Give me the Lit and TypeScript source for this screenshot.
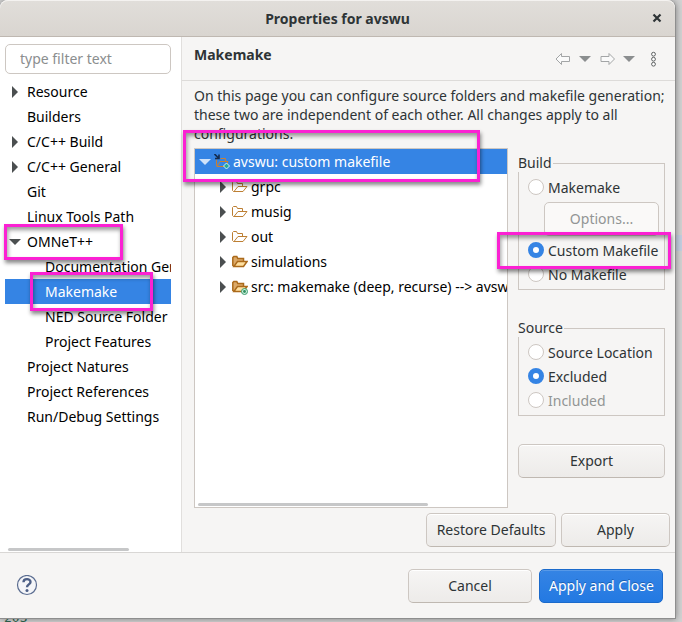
import { LitElement, html, css, svg, nothing } from "lit";
import { customElement, state } from "lit/decorators.js";
import { classMap } from "lit/directives/class-map.js";

interface Page {
  label: string;
  level: number;
  arrow?: "open" | "closed";
}

interface Folder {
  label: string;
  icon: "plain" | "full" | "source";
}

const pages: Page[] = [
  { label: "Resource", level: 0, arrow: "closed" },
  { label: "Builders", level: 0 },
  { label: "C/C++ Build", level: 0, arrow: "closed" },
  { label: "C/C++ General", level: 0, arrow: "closed" },
  { label: "Git", level: 0 },
  { label: "Linux Tools Path", level: 0 },
  { label: "OMNeT++", level: 0, arrow: "open" },
  { label: "Documentation Generation", level: 1 },
  { label: "Makemake", level: 1 },
  { label: "NED Source Folder", level: 1 },
  { label: "Project Features", level: 1 },
  { label: "Project Natures", level: 0 },
  { label: "Project References", level: 0 },
  { label: "Run/Debug Settings", level: 0 },
];

const folders: Folder[] = [
  { label: "grpc", icon: "plain" },
  { label: "musig", icon: "plain" },
  { label: "out", icon: "plain" },
  { label: "simulations", icon: "full" },
  { label: "src: makemake (deep, recurse) --> avswu", icon: "source" },
];

const closedArrow = svg`<path d="M3 0 L9 6 L3 12 Z" fill="currentColor" />`;
const openArrow = svg`<path d="M0 3 H12 L6 9 Z" fill="currentColor" />`;

const arrow = (kind?: "open" | "closed") => html`
  <svg class="arrow" viewBox="0 0 12 12" width="12" height="12" aria-hidden="true">
    ${kind === "open" ? openArrow : kind === "closed" ? closedArrow : nothing}
  </svg>
`;

const outline = svg`
  <path d="M2.5 12.5 H1.5 L0.5 11.5 V3.5 L1.5 2.5 H4.5 L5.5 4.5 H10.5 V7" fill="none" stroke="#bd7f33" />
  <path d="M2 12.5 L6 7.5 H15 L11 12.5 Z" fill="#fff" stroke="#bd7f33" />`;
const filled = svg`
  <path d="M2 12.5 L0.8 11.5 V3.5 L1.8 2.6 H4.8 L5.8 4.6 H11.5 V7" fill="#dba968" stroke="#ab6a1b" stroke-width="1.5" />
  <path d="M2 12.4 L5.5 7.5 H15 L11.5 12.4 Z" fill="#ffe0a0" stroke="#ab6a1b" stroke-width="1.5" />`;
const dot = svg`
  <circle cx="12.5" cy="12.5" r="3" fill="#cdeedd" stroke="#3a9d6c" />
  <circle cx="12.5" cy="12.5" r="1.4" fill="#2f8f60" />`;

const folderIcon = (kind: Folder["icon"]) => html`
  <svg class="icon" viewBox="0 0 16 16" width="16" height="16" aria-hidden="true">
    ${kind === "plain" ? outline : filled} ${kind === "source" ? dot : nothing}
  </svg>
`;

@customElement("app-root")
export class AppRoot extends LitElement {
  @state() private selected = "Makemake";

  static styles = css`
    :host {
      display: block;
      position: relative;
      min-height: 100vh;
      box-sizing: border-box;
      padding: 0 6px 3px 0;
      overflow: hidden;
      background: #d2d2d2;
      color: #2e3436;
      font: 14px/19px "Noto Sans", sans-serif;
    }
    * {
      box-sizing: border-box;
    }
    button,
    input {
      font: inherit;
      color: inherit;
      margin: 0;
    }
    .line-number {
      position: absolute;
      left: 4px;
      bottom: -3px;
      color: #2f6650;
      font: 13px/14px "DejaVu Sans Mono", monospace;
    }
    .backdrop-row {
      position: absolute;
      right: 0;
      top: 235px;
      width: 6px;
      height: 16px;
      background: #c4cfe0;
    }
    .dialog {
      position: relative;
      display: flex;
      flex-direction: column;
      min-height: calc(100vh - 3px);
      background: #f6f5f4;
      border-right: 1px solid #8e8e8e;
      border-bottom: 1px solid #8e8e8e;
      border-radius: 8px 8px 0 0;
      box-shadow: 0 0 6px #0006;
    }
    .titlebar {
      display: grid;
      grid-template-columns: 36px 1fr 36px;
      align-items: center;
      height: 37px;
      border-bottom: 1px solid #bfb8b1;
      border-radius: 8px 8px 0 0;
      background: linear-gradient(#e1deda, #d9d5d0);
      box-shadow: inset 0 1px #f4f2f0;
      text-align: center;
    }
    .titlebar h1,
    .page-head h2 {
      margin: 0;
      font-size: 14px;
      font-weight: 700;
    }
    .titlebar h1 {
      grid-column: 2;
    }
    .plain {
      display: flex;
      align-items: center;
      justify-content: center;
      padding: 0;
      border: 0;
      background: none;
      color: #8b8e8f;
    }
    .titlebar .plain {
      color: #2e3436;
    }
    .body {
      flex: 1;
      display: grid;
      grid-template-columns: 182px minmax(0, 1fr);
      border-bottom: 1px solid #d9d7d5;
    }
    .sidebar {
      display: flex;
      flex-direction: column;
      padding: 7px 10px 1px 5px;
      border-right: 1px solid #e1dfdd;
      background: #fff;
      color: #000;
    }
    .filter {
      width: 100%;
      height: 30px;
      padding: 0 14px 2px;
      border: 1px solid #cdc7c2;
      border-radius: 5px;
      background: #fff;
    }
    .filter::placeholder {
      color: #8b8e8f;
      opacity: 1;
    }
    .tree {
      margin: 0;
      padding: 0;
      list-style: none;
      overflow: hidden;
    }
    .pages {
      margin-top: 5px;
    }
    .row {
      display: flex;
      align-items: center;
      gap: 6px;
      height: 25px;
      padding-left: 4px;
      white-space: nowrap;
      cursor: default;
    }
    .row.child {
      padding-left: 22px;
    }
    .row.selected {
      background: #3584e4;
      color: #fff;
    }
    .arrow,
    .icon {
      flex: none;
      color: #4b4f50;
    }
    .selected .arrow {
      color: #cfe2fa;
    }
    .scrollbar {
      height: 3px;
      border-radius: 2px;
      background: #c6c7c8;
    }
    .sidebar .scrollbar {
      width: 121px;
      margin: auto 0 0 3px;
    }
    .page {
      display: flex;
      flex-direction: column;
      min-width: 0;
    }
    .page-head {
      display: flex;
      align-items: center;
      justify-content: space-between;
      height: 44px;
      padding: 0 16px 0 12px;
      border-bottom: 1px solid #dddbd9;
    }
    .page-head h2 {
      margin-bottom: 9px;
    }
    .tools {
      display: flex;
      align-items: center;
      gap: 8px;
    }
    .intro {
      height: 62px;
      margin: 0;
      padding: 5px 6px 0 12px;
    }
    .columns {
      flex: 1;
      display: grid;
      grid-template-columns: minmax(0, 1fr) 147px;
      gap: 10px;
      padding: 5px 10px 0 12px;
    }
    .folders {
      position: relative;
      display: flex;
      flex-direction: column;
      height: 360px;
      border: 1px solid #cdc7c2;
      background: #fff;
      color: #000;
    }
    .folders .row {
      gap: 3px;
    }
    .folders .scrollbar {
      width: 230px;
      margin: auto 0 1px 3px;
    }
    .side {
      display: flex;
      flex-direction: column;
    }
    .group {
      position: relative;
      display: flex;
      flex-direction: column;
      margin: 15px 0 0;
      padding: 11px 5px 3px 9px;
      border: 1px solid #cdc7c2;
      min-width: 0;
    }
    .group.source {
      margin-top: 38px;
      padding-bottom: 3px;
    }
    .group-title {
      position: absolute;
      top: -11px;
      left: -1px;
      padding-right: 1px;
      background: #f6f5f4;
    }
    .choice {
      display: flex;
      align-items: center;
      gap: 4px;
      height: 24px;
      white-space: nowrap;
    }
    .choice.off {
      color: #929595;
    }
    .choice input {
      appearance: none;
      flex: none;
      width: 16px;
      height: 16px;
      border: 1px solid #cdc7c2;
      border-radius: 50%;
      background: #fff;
    }
    .choice input:checked {
      border: 5px solid #3584e4;
    }
    .btn {
      height: 34px;
      padding: 0 9px 2px;
      border: 1px solid #cdc7c2;
      border-bottom-color: #bfb8b1;
      border-radius: 5px;
      background: linear-gradient(#f6f5f4, #edebe9);
      box-shadow: inset 0 1px #fff;
      white-space: nowrap;
    }
    .btn:disabled {
      border-color: #cdc7c2;
      background: #faf9f8;
      box-shadow: none;
      color: #929595;
    }
    .options {
      margin: 3px 0 2px 16px;
    }
    .export {
      margin-top: 28px;
    }
    .actions {
      display: flex;
      justify-content: flex-end;
      gap: 5px;
      padding: 5px 5px 5px;
    }
    .restore {
      width: 130px;
    }
    .apply {
      width: 109px;
    }
    .footer {
      display: flex;
      align-items: center;
      gap: 7px;
      height: 65px;
      padding: 0 12px 0 16px;
    }
    .help {
      margin-right: auto;
    }
    .footer .btn {
      width: 124px;
      padding-bottom: 1px;
    }
    .footer .primary {
      border-color: #1b6acb;
      background: linear-gradient(#3584e4, #2379e2);
      box-shadow: inset 0 1px #5799e8;
      color: #fff;
      text-shadow: 0 -1px #1b5fb4;
    }
    .mark {
      position: absolute;
      border: 3px solid #fb21d3;
      box-shadow: 1px 3px 4px #0007, inset 1px 3px 4px #0006;
      pointer-events: none;
    }
    .mark-project {
      left: 183px;
      top: 130px;
      width: 297px;
      height: 52px;
    }
    .mark-omnet {
      left: 4px;
      top: 224px;
      width: 119px;
      height: 36px;
    }
    .mark-makemake {
      left: 30px;
      top: 272px;
      width: 123px;
      height: 39px;
    }
    .mark-custom {
      left: 497px;
      top: 232px;
      width: 174px;
      height: 37px;
    }
  `;

  private renderPage(page: Page) {
    const active = page.label === this.selected;
    return html`
      <li
        class=${classMap({ row: true, child: page.level === 1, selected: active })}
        role="treeitem"
        aria-selected=${active}
        @click=${() => (this.selected = page.label)}
      >
        ${arrow(page.arrow)}<span>${page.label}</span>
      </li>
    `;
  }

  private renderChoice(group: string, label: string, checked = false, off = false) {
    return html`
      <label class=${classMap({ choice: true, off })}>
        <input type="radio" name=${group} .checked=${checked} ?disabled=${off} />${label}
      </label>
    `;
  }

  render() {
    return html`
      <span class="line-number">203</span>
      <div class="backdrop-row"></div>
      <main class="dialog">
        <header class="titlebar">
          <h1>Properties for avswu</h1>
          <button class="plain" aria-label="Close">
            <svg width="10" height="10" viewBox="0 0 10 10">
              <path d="M1.5 1.5 L8.5 8.5 M8.5 1.5 L1.5 8.5" stroke="currentColor" stroke-width="2.2" />
            </svg>
          </button>
        </header>
        <div class="body">
          <nav class="sidebar">
            <input class="filter" type="text" placeholder="type filter text" aria-label="Filter" />
            <ul class="tree pages" role="tree">
              ${pages.map((page) => this.renderPage(page))}
            </ul>
            <div class="scrollbar"></div>
          </nav>
          <section class="page">
            <div class="page-head">
              <h2>Makemake</h2>
              <div class="tools">
                <button class="plain" aria-label="Back">
                  <svg width="16" height="14" viewBox="0 0 16 14">
                    <path d="M1 7 L6.5 1.5 V4.5 H14.5 V9.5 H6.5 V12.5 Z" fill="#fafafa" stroke="#a3a5a6" />
                  </svg>
                </button>
                <button class="plain" aria-label="Back history">
                  <svg width="12" height="12" viewBox="0 0 12 12">${openArrow}</svg>
                </button>
                <button class="plain" aria-label="Forward">
                  <svg width="16" height="14" viewBox="0 0 16 14">
                    <path d="M15.5 7 L10 1.5 V4.5 H2 V9.5 H10 V12.5 Z" fill="#fafafa" stroke="#a3a5a6" />
                  </svg>
                </button>
                <button class="plain" aria-label="Forward history">
                  <svg width="12" height="12" viewBox="0 0 12 12">${openArrow}</svg>
                </button>
                <button class="plain menu" aria-label="Menu">
                  <svg width="16" height="16" viewBox="0 0 16 16" fill="#fff" stroke="#5c5f60">
                    <circle cx="10.5" cy="3.2" r="1.9" />
                    <circle cx="10.5" cy="8.2" r="1.9" />
                    <circle cx="10.5" cy="13.2" r="1.9" />
                  </svg>
                </button>
              </div>
            </div>
            <p class="intro">
              On this page you can configure source folders and makefile generation; these two are
              independent of each other. All changes apply to all configurations.
            </p>
            <div class="columns">
              <div class="folders">
                <ul class="tree" role="tree">
                  <li class="row selected" role="treeitem" aria-selected="true">
                    ${arrow("open")}
                    <svg class="icon" width="16" height="16" viewBox="0 0 16 16" aria-hidden="true">
                      <path d="M3 12.5 L2.5 11.5 V5.5 M6.5 4.5 H11.5 V7" fill="none" stroke="#c98032" />
                      <path d="M3 12.5 L6 7.5 H14 L11.5 12.5 Z" fill="none" stroke="#c98032" />
                      <path d="M0.5 0 L4.5 4 M5 0.5 V4.5 H1" fill="none" stroke="#142c50" stroke-width="1.6" />
                      <path d="M12.5 9 L15.5 12 L12.5 15 L9.5 12 Z" fill="#28a99a" stroke="#d3f3ee" />
                    </svg>
                    <span>avswu: custom makefile</span>
                  </li>
                  ${folders.map(
                    (folder) => html`
                      <li class="row child" role="treeitem">
                        ${arrow("closed")}${folderIcon(folder.icon)}<span>${folder.label}</span>
                      </li>
                    `,
                  )}
                </ul>
                <div class="scrollbar"></div>
              </div>
              <div class="side">
                <div class="group" role="radiogroup" aria-labelledby="build-title">
                  <span class="group-title" id="build-title">Build</span>
                  ${this.renderChoice("build", "Makemake")}
                  <button class="btn options" disabled>Options...</button>
                  ${this.renderChoice("build", "Custom Makefile", true)}
                  ${this.renderChoice("build", "No Makefile")}
                </div>
                <div class="group source" role="radiogroup" aria-labelledby="source-title">
                  <span class="group-title" id="source-title">Source</span>
                  ${this.renderChoice("source", "Source Location")}
                  ${this.renderChoice("source", "Excluded", true)}
                  ${this.renderChoice("source", "Included", false, true)}
                </div>
                <button class="btn export">Export</button>
              </div>
            </div>
            <div class="actions">
              <button class="btn restore">Restore Defaults</button>
              <button class="btn apply">Apply</button>
            </div>
          </section>
        </div>
        <footer class="footer">
          <button class="plain help" aria-label="Help">
            <svg width="22" height="22" viewBox="0 0 22 22">
              <circle cx="11" cy="9" r="9.5" fill="#f4f5f8" stroke="#5a6c90" stroke-width="1.2" transform="translate(0 1)" />
              <path
                d="M7.5 7.2 C7.5 3.2 14.5 3.2 14.5 7 C14.5 9.4 11 9.4 11 12.2"
                fill="none"
                stroke="#4d5f86"
                stroke-width="2.4"
              />
              <circle cx="11" cy="15.4" r="1.5" fill="#4d5f86" />
            </svg>
          </button>
          <button class="btn">Cancel</button>
          <button class="btn primary">Apply and Close</button>
        </footer>
        <div class="mark mark-omnet"></div>
        <div class="mark mark-makemake"></div>
        <div class="mark mark-project"></div>
        <div class="mark mark-custom"></div>
      </main>
    `;
  }
}
